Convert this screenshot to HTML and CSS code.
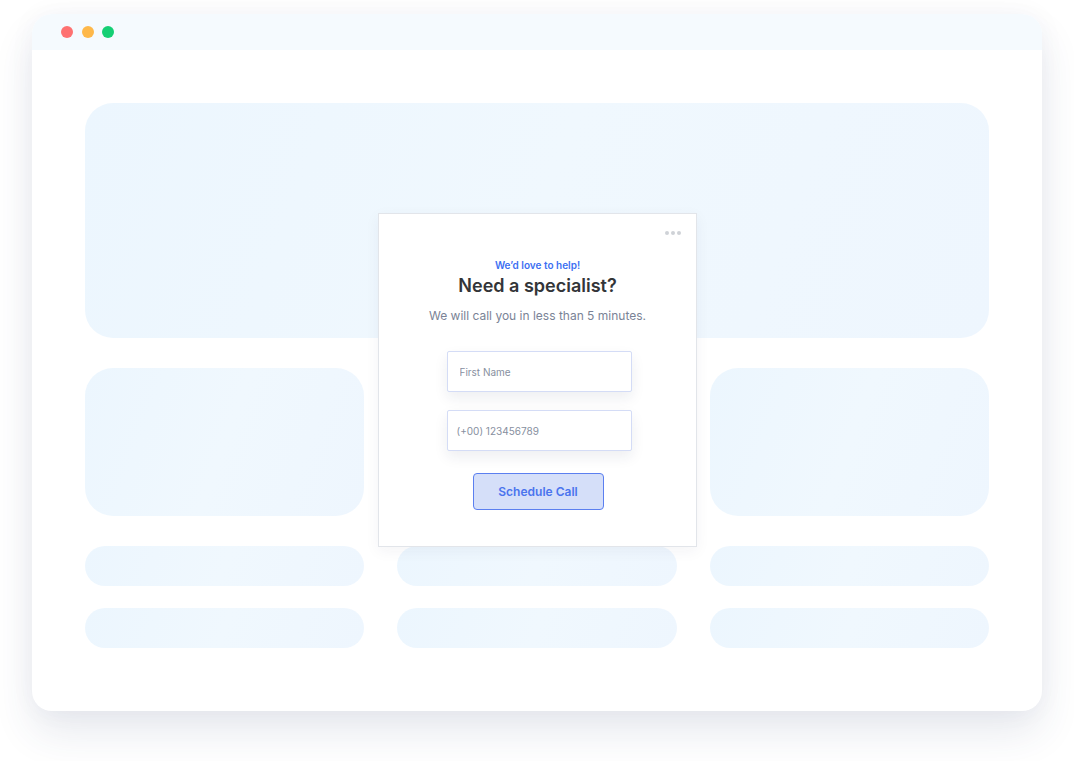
FILE: index.html
```html
<!DOCTYPE html>
<html lang="en">
<head>
  <meta charset="UTF-8">
  <meta content="width=device-width, initial-scale=1.0" name="viewport">
  <title>Need a specialist?</title>
  <link rel="stylesheet" href="styles.css">
</head>
<body>
<div class="window">
  <header class="window-bar">
    <span class="dot dot-red"></span>
    <span class="dot dot-orange"></span>
    <span class="dot dot-green"></span>
  </header>
  <main class="window-body">
    <div class="block block-hero"></div>
    <div class="block block-card"></div>
    <div class="block block-card"></div>
    <div class="block block-card"></div>
    <div class="block block-pill"></div>
    <div class="block block-pill"></div>
    <div class="block block-pill"></div>
    <div class="block block-pill block-pill-last"></div>
    <div class="block block-pill block-pill-last"></div>
    <div class="block block-pill block-pill-last"></div>

    <form class="popup">
      <span class="popup-menu"><i></i><i></i><i></i></span>
      <p class="popup-kicker">We’d love to help!</p>
      <h1 class="popup-title">Need a specialist?</h1>
      <p class="popup-text">We will call you in less than 5 minutes.</p>
      <input class="field field-name" type="text" placeholder="First Name">
      <input class="field field-phone" type="tel" placeholder="(+00) 123456789">
      <button class="popup-button" type="button">Schedule Call</button>
    </form>
  </main>
</div>
</body>
</html>
```

FILE: styles.css
```css
* {
  box-sizing: border-box;
}

body {
  background: #fff;
  font-family: Inter, "Noto Sans", sans-serif;
  margin: 0;
  min-height: 100vh;
  padding: 14px 32px 0;
}

.window {
  background: #fff;
  border-radius: 20px;
  box-shadow: 0 22px 40px rgba(50, 60, 110, 0.11), 0 0 28px rgba(50, 60, 110, 0.04);
  height: 697px;
  overflow: hidden;
  width: 1010px;
}

.window-bar {
  align-items: center;
  background: #f5fafe;
  display: flex;
  gap: 8.5px;
  height: 36px;
  padding-left: 29px;
}

.dot {
  border-radius: 50%;
  height: 12px;
  width: 12px;

  &.dot-red {
    background: #fe7171;
  }

  &.dot-orange {
    background: #feb84a;
  }

  &.dot-green {
    background: #15cf74;
  }
}

.window-body {
  display: grid;
  gap: 30px 33px;
  grid-template-columns: repeat(3, 1fr);
  grid-template-rows: 235px 148px 40px 40px;
  padding: 53px 53px 0;
  position: relative;
}

.block {
  background: linear-gradient(110deg, #ecf6fe 0%, #f0f8fe 50%, #eef6fe 100%);
  border-radius: 28px;
}

.block-hero {
  grid-column: 1 / -1;
}

.block-pill {
  border-radius: 20px;
  height: 40px;
}

.block-pill-last {
  margin-top: -8px;
}

.popup {
  align-items: center;
  background: #fff;
  border: 1px solid #e2e5ea;
  box-shadow: 0 4px 14px rgba(30, 40, 70, 0.05);
  display: flex;
  flex-direction: column;
  height: 334px;
  left: 346px;
  padding-top: 45px;
  position: absolute;
  top: 163px;
  width: 319px;
}

.popup-menu {
  display: flex;
  gap: 2px;
  position: absolute;
  right: 15px;
  top: 17px;

  & i {
    background: #cfd2d7;
    border-radius: 50%;
    height: 4px;
    width: 4px;
  }
}

.popup-kicker {
  color: #3c6ff2;
  font-size: 10px;
  font-weight: 600;
  margin: 0;
}

.popup-title {
  color: #333538;
  font-size: 18px;
  font-weight: 600;
  margin: 4px 0 0;
}

.popup-text {
  color: #7a8396;
  font-size: 12px;
  margin: 12px 0 0;
}

.field {
  background: #fff;
  border: 1px solid #d4dcf6;
  border-radius: 2px;
  box-shadow: 0 6px 14px rgba(30, 40, 80, 0.08);
  color: #333;
  font-family: inherit;
  font-size: 10px;
  height: 41px;
  margin-left: 3px;
  outline: none;
  width: 185px;

  &::placeholder {
    color: #878fa0;
  }
}

.field-name {
  margin-top: 28px;
  padding-left: 12px;
}

.field-phone {
  margin-top: 18px;
  padding-left: 9px;
}

.popup-button {
  background: #d5dff9;
  border: 1px solid #5b7ff0;
  border-radius: 4px;
  color: #4a74ee;
  font-family: inherit;
  font-size: 12px;
  font-weight: 600;
  height: 37px;
  margin-left: 1px;
  margin-top: 22px;
  width: 131px;
}
```
